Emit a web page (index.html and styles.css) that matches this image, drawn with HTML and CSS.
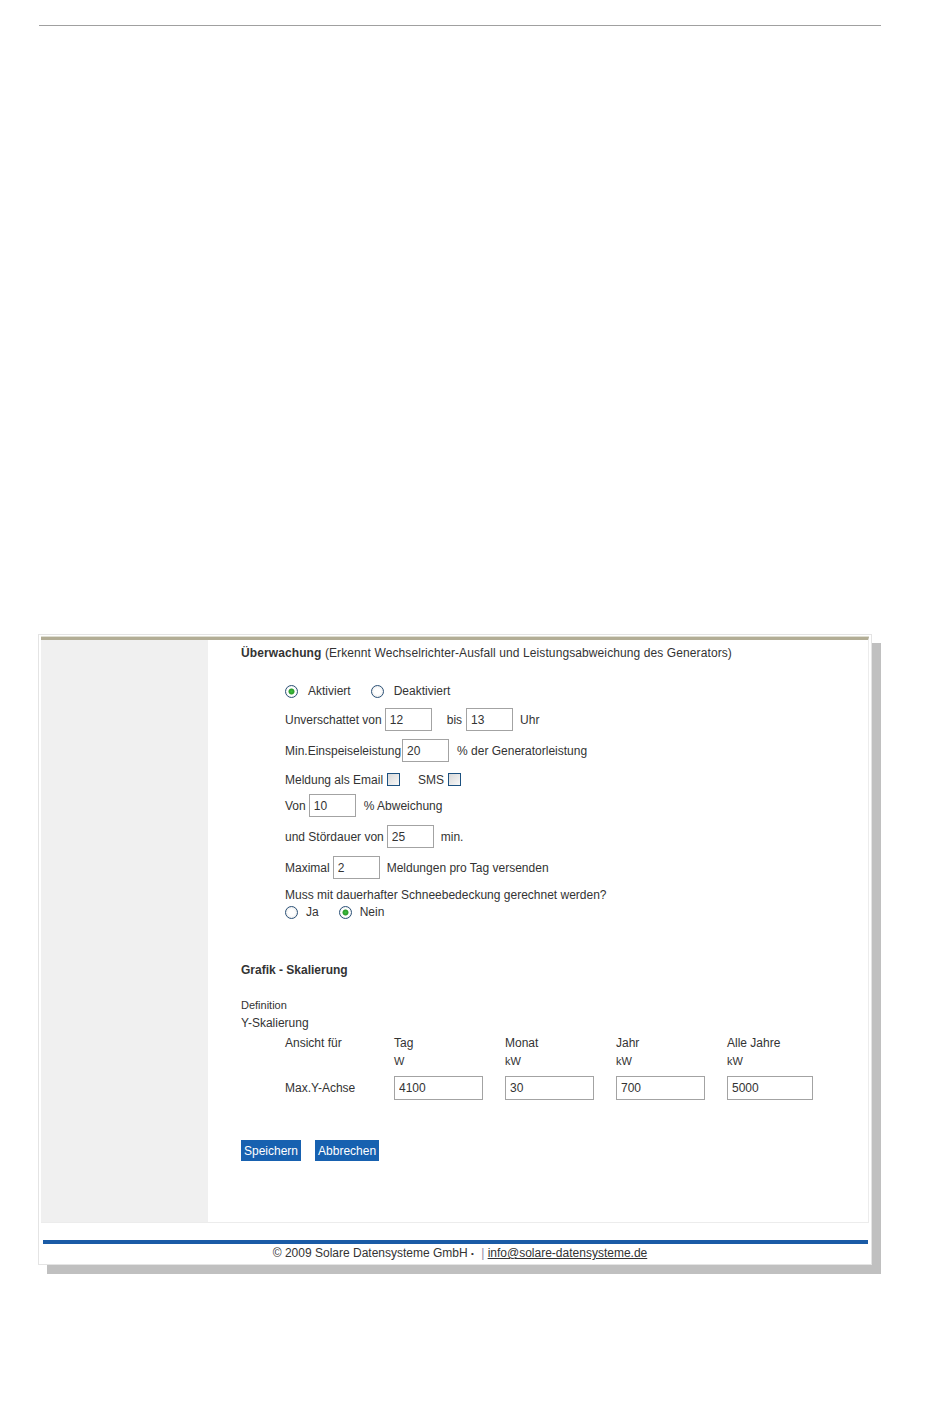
FILE: index.html
```html
<!DOCTYPE html>
<html lang="de">
<head>
    <meta charset="UTF-8">
    <title>Einstellungen - Überwachung</title>
    <link rel="stylesheet" href="styles.css">
</head>
<body>
    <div class="top-rule"></div>

    <div class="frame">
        <div class="main">
            <div class="sidebar"></div>

            <form class="content">
                <div class="heading"><b>Überwachung</b> (Erkennt Wechselrichter-Ausfall und Leistungsabweichung des Generators)</div>

                <div class="block">
                    <div class="row r-status">
                        <label class="opt"><input type="radio" name="status" checked><span>Aktiviert</span></label>
                        <label class="opt opt-next"><input type="radio" name="status"><span>Deaktiviert</span></label>
                    </div>

                    <div class="row r1">
                        <span>Unverschattet von</span>
                        <input class="field" type="text" value="12">
                        <span class="gap-bis">bis</span>
                        <input class="field field-bis" type="text" value="13">
                        <span class="after">Uhr</span>
                    </div>

                    <div class="row r2">
                        <span>Min.Einspeiseleistung</span>
                        <input class="field" type="text" value="20">
                        <span class="after">% der Generatorleistung</span>
                    </div>

                    <div class="row r3">
                        <span>Meldung als Email</span>
                        <input class="check" type="checkbox">
                        <span class="gap-sms">SMS</span>
                        <input class="check" type="checkbox">
                    </div>

                    <div class="row r4">
                        <span>Von</span>
                        <input class="field" type="text" value="10">
                        <span class="after">% Abweichung</span>
                    </div>

                    <div class="row r5">
                        <span>und Stördauer von</span>
                        <input class="field" type="text" value="25">
                        <span class="after">min.</span>
                    </div>

                    <div class="row r6">
                        <span>Maximal</span>
                        <input class="field" type="text" value="2">
                        <span class="after">Meldungen pro Tag versenden</span>
                    </div>

                    <div class="question">Muss mit dauerhafter Schneebedeckung gerechnet werden?</div>
                    <div class="row r-snow">
                        <label class="opt opt-tight"><input type="radio" name="snow"><span>Ja</span></label>
                        <label class="opt opt-tight opt-next"><input type="radio" name="snow" checked><span>Nein</span></label>
                    </div>
                </div>

                <div class="section-title">Grafik - Skalierung</div>
                <div class="definition">Definition</div>
                <div class="subtitle">Y-Skalierung</div>

                <div class="scale">
                    <div>Ansicht für</div>
                    <div>Tag</div>
                    <div>Monat</div>
                    <div>Jahr</div>
                    <div>Alle Jahre</div>

                    <div></div>
                    <div class="unit">W</div>
                    <div class="unit">kW</div>
                    <div class="unit">kW</div>
                    <div class="unit">kW</div>

                    <div class="max-label">Max.Y-Achse</div>
                    <div class="cell"><input class="field wide" type="text" value="4100"></div>
                    <div class="cell"><input class="field wide" type="text" value="30"></div>
                    <div class="cell"><input class="field wide" type="text" value="700"></div>
                    <div class="cell"><input class="field wide last" type="text" value="5000"></div>
                </div>

                <div class="buttons">
                    <button type="button">Speichern</button>
                    <button type="button">Abbrechen</button>
                </div>
            </form>
        </div>

        <div class="footer">
            © 2009 Solare Datensysteme GmbH <span class="dot">•</span> <span class="sep">|</span> <a href="#">info@solare-datensysteme.de</a>
        </div>
    </div>
</body>
</html>
```

FILE: styles.css
```css
* {
    box-sizing: border-box;
}

body {
    margin: 0;
    padding-bottom: 60px;
    font-family: "Liberation Sans", Arial, sans-serif;
    font-size: 12px;
    color: #333;
    background: #fff;
}

.top-rule {
    margin: 25px 0 0 39px;
    width: 842px;
    height: 1px;
    background: #a0a0a0;
}

/* outer box with the flat grey drop shadow */
.frame {
    margin: 608px 0 0 38px;
    width: 834px;
    padding: 2px;
    border: 1px solid #e4e4e4;
    background: #fff;
    box-shadow: 9px 9px 0 #c0c0c0;
}

.main {
    display: flex;
    border-top: 3px solid #b2ad95;
    border-right: 1px solid #ececec;
    border-bottom: 1px solid #ececec;
    box-shadow: 0 -1px 0 #deddd2;
}

.sidebar {
    flex: none;
    width: 167px;
    background: #f0f0f0;
}

.content {
    flex: 1;
    margin: 0;
    padding: 0 0 61px 33px;
}

.heading {
    height: 26px;
    line-height: 26px;
    letter-spacing: 0.1px;
}

.block {
    padding-left: 44px;
}

.row {
    display: flex;
    align-items: center;
    height: 23px;
    margin-top: 8px;
}

.r-status {
    height: 20px;
    margin-top: 15px;
}

.r1 { margin-top: 7px; }
.r3 { margin-top: 6px; }
.r4 { margin-top: 3px; }

.question {
    height: 16px;
    line-height: 16px;
    margin-top: 8px;
}

.r-snow {
    height: 16px;
    margin-top: 1px;
}

.opt {
    display: flex;
    align-items: center;
}

.opt span {
    margin-left: 10px;
}

.opt-tight span {
    margin-left: 8px;
}

.opt-next {
    margin-left: 20px;
}

input[type="radio"] {
    appearance: none;
    -webkit-appearance: none;
    margin: 0;
    width: 13px;
    height: 13px;
    border: 1px solid #2b5177;
    border-radius: 50%;
    background: radial-gradient(circle, #fff 0, #fff 3px, #e4e4e4 7px);
}

input[type="radio"]:checked {
    background: radial-gradient(circle, #3fc23f 0, #2a9a2a 2.6px, #fff 3.4px, #fff 4px, #e4e4e4 7px);
}

.check {
    appearance: none;
    -webkit-appearance: none;
    margin: 0 0 0 4px;
    width: 13px;
    height: 13px;
    border: 1px solid #1c5180;
    background: linear-gradient(135deg, #d8d8d8, #f8f8f8);
}

.gap-sms {
    margin-left: 18px;
}

.field {
    margin-left: 3px;
    width: 47px;
    height: 23px;
    padding: 0 4px;
    border: 1px solid #a3a3a3;
    font-family: inherit;
    font-size: 12px;
    color: #333;
    background: #fff;
}

.r2 .field {
    margin-left: 1px;
}

.field-bis {
    margin-left: 4px;
}

.gap-bis {
    margin-left: 15px;
}

.after {
    margin-left: 8px;
}

.r1 .after,
.r5 .after,
.r6 .after {
    margin-left: 7px;
}

.section-title {
    margin-top: 42px;
    height: 16px;
    line-height: 16px;
    font-weight: bold;
}

.definition {
    margin-top: 19px;
    height: 16px;
    line-height: 16px;
    font-size: 11px;
}

.subtitle {
    margin-top: 2px;
    height: 16px;
    line-height: 16px;
}

.scale {
    display: grid;
    grid-template-columns: 109px 111px 111px 111px 111px;
    grid-template-rows: 16px 16px 29px;
    row-gap: 2px;
    margin-top: 4px;
    padding-left: 44px;
    line-height: 16px;
}

.unit {
    font-size: 11px;
}

.max-label,
.cell {
    align-self: end;
    height: 24px;
}

.max-label {
    line-height: 24px;
}

.field.wide {
    display: block;
    margin-left: 0;
    width: 89px;
    height: 24px;
}

.field.last {
    width: 86px;
}

.buttons {
    display: flex;
    gap: 14px;
    margin-top: 40px;
}

.buttons button {
    height: 21px;
    padding: 0 3px;
    border: none;
    background: #1761b0;
    color: #fff;
    font-family: inherit;
    font-size: 12px;
    cursor: pointer;
}

.footer {
    margin: 17px 1px 0 2px;
    padding-left: 9px;
    border-top: 4px solid #1a5ba6;
    height: 22px;
    line-height: 18px;
    text-align: center;
}

.footer .dot {
    font-size: 8px;
    vertical-align: 1px;
}

.footer .sep {
    margin-left: 4px;
    color: #8a8aa8;
}

.footer a {
    color: #333;
}
```
